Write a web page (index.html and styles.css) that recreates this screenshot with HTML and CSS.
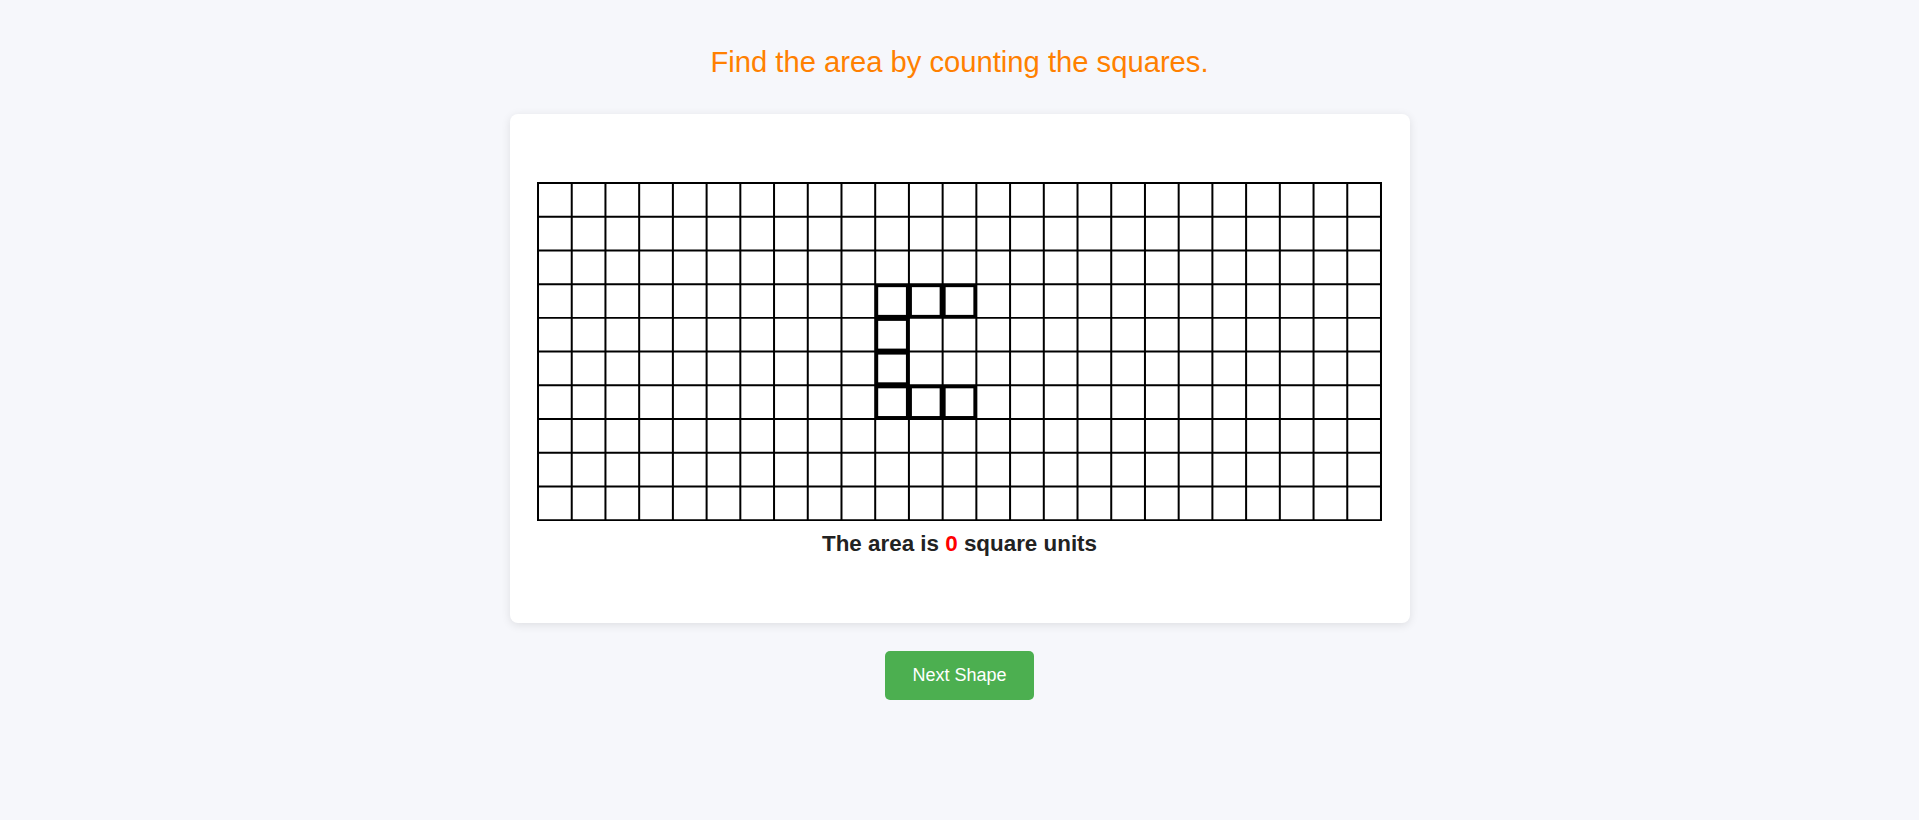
FILE: index.html
```html
<!DOCTYPE html>
<html lang="en">
<head>
<meta charset="utf-8">
<title>Area by counting squares</title>
<link rel="stylesheet" href="styles.css">
</head>
<body>
<main class="page">
  <h1 class="title">Find the area by counting the squares.</h1>
  <section class="card">
    <svg class="grid" width="845" height="339.2" viewBox="0 0 845 339.2" xmlns="http://www.w3.org/2000/svg">
      <rect x="0" y="0" width="845" height="339.2" fill="#fff"/>
      <path class="lines" d="M1 0V339.2M34.72 0V339.2M68.44 0V339.2M102.16 0V339.2M135.88 0V339.2M169.6 0V339.2M203.32 0V339.2M237.04 0V339.2M270.76 0V339.2M304.48 0V339.2M338.2 0V339.2M371.92 0V339.2M405.64 0V339.2M439.36 0V339.2M473.08 0V339.2M506.8 0V339.2M540.52 0V339.2M574.24 0V339.2M607.96 0V339.2M641.68 0V339.2M675.4 0V339.2M709.12 0V339.2M742.84 0V339.2M776.56 0V339.2M810.28 0V339.2M844 0V339.2M0 1H845M0 34.72H845M0 68.44H845M0 102.16H845M0 135.88H845M0 169.6H845M0 203.32H845M0 237.04H845M0 270.76H845M0 304.48H845M0 338.2H845"/>
      <g class="shape">
        <rect x="339.7" y="103.66" width="30.72" height="30.72"/>
        <rect x="373.42" y="103.66" width="30.72" height="30.72"/>
        <rect x="407.14" y="103.66" width="30.72" height="30.72"/>
        <rect x="339.7" y="137.38" width="30.72" height="30.72"/>
        <rect x="339.7" y="171.1" width="30.72" height="30.72"/>
        <rect x="339.7" y="204.82" width="30.72" height="30.72"/>
        <rect x="373.42" y="204.82" width="30.72" height="30.72"/>
        <rect x="407.14" y="204.82" width="30.72" height="30.72"/>
      </g>
    </svg>
    <p class="result">The area is <span class="num">0</span> square units</p>
  </section>
  <button class="next" type="button">Next Shape</button>
</main>
</body>
</html>
```

FILE: styles.css
```css
html, body {
  margin: 0;
  padding: 0;
}

body {
  background: #f6f7fb;
  font-family: "Liberation Sans", Arial, sans-serif;
  color: #222;
}

.page {
  display: flex;
  flex-direction: column;
  align-items: center;
  padding-top: 46px;
}

.title {
  margin: 0;
  font-size: 29.2px;
  font-weight: normal;
  line-height: normal;
  color: #ff8000;
  text-align: center;
}

.card {
  box-sizing: border-box;
  width: 900px;
  margin-top: 35px;
  padding: 68px 27.5px 65.5px;
  background: #fff;
  border-radius: 8px;
  box-shadow: 0 2px 10px rgba(0, 0, 0, 0.1);
  display: flex;
  flex-direction: column;
  align-items: center;
}

.grid {
  display: block;
}

.lines {
  stroke: #000;
  stroke-width: 2;
  fill: none;
}

.shape rect {
  fill: none;
  stroke: #000;
  stroke-width: 3;
}

.result {
  margin: 10px 0 0;
  font-size: 22.4px;
  font-weight: bold;
  line-height: normal;
  color: #222;
  text-align: center;
}

.num {
  color: #f00;
}

.next {
  margin-top: 28px;
  padding: 14px 27px;
  border: none;
  border-radius: 5px;
  background: #4caf50;
  color: #fff;
  font-family: "Liberation Sans", Arial, sans-serif;
  font-size: 18px;
  line-height: normal;
  cursor: pointer;
}
```
